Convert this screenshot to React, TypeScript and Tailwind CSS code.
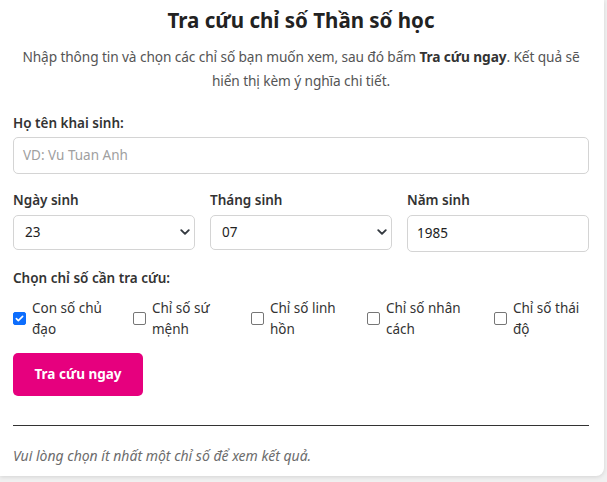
import React from "react";

const options = [
  { l1: "Con số chủ", l2: "đạo", w: "w-[120px]", checked: true },
  { l1: "Chỉ số sứ", l2: "mệnh", w: "w-[118px]", checked: false },
  { l1: "Chỉ số linh", l2: "hồn", w: "w-[116px]", checked: false },
  { l1: "Chỉ số nhân", l2: "cách", w: "w-[127px]", checked: false },
  { l1: "Chỉ số thái", l2: "độ", w: "flex-1", checked: false },
];

function Chevron() {
  return (
    <svg width="10" height="10" viewBox="0 0 16 16" className="text-[#343a40]">
      <path d="M2 5l6 6 6-6" fill="none" stroke="currentColor" strokeWidth="3" strokeLinecap="round" strokeLinejoin="round" />
    </svg>
  );
}

export default function App() {
  return (
    <div
      className="w-[607px] h-[482px] bg-[#f0f0f0] overflow-hidden text-[#212529]"
      style={{ fontFamily: '"Segoe UI", "Noto Sans", sans-serif' }}
    >
      <div className="w-[604px] h-[476px] bg-white rounded-br-[8px] shadow-[0_1px_4px_rgba(0,0,0,0.12)] pl-[13px] pr-[15px] pt-[6px]">
        <h1 className="text-center text-[20.5px] leading-[28px] font-bold text-[#222]">
          Tra cứu chỉ số Thần số học
        </h1>
        <p className="mt-[11px] text-center text-[13.7px] leading-[23.5px] text-[#555] tracking-[-0.1px]">
          Nhập thông tin và chọn các chỉ số bạn muốn xem, sau đó bấm <b className="font-bold text-[#333]">Tra cứu ngay</b>. Kết quả sẽ
          <br />
          hiển thị kèm ý nghĩa chi tiết.
        </p>

        <div className="mt-[21px] text-[13.5px] leading-[21px] font-semibold text-[#333]">Họ tên khai sinh:</div>
        <div className="mt-[2.5px] h-[37px] border border-[#d4d4d4] rounded-[5px] flex items-center pl-[9px] text-[13.5px] text-[#a0a0a0]">
          VD: Vu Tuan Anh
        </div>

        <div className="mt-[16.5px] flex gap-[15px]">
          <div className="w-[182px]">
            <div className="text-[13.5px] leading-[21px] font-semibold text-[#333]">Ngày sinh</div>
            <div className="mt-[3.5px] h-[35px] border border-[#d4d4d4] rounded-[5px] flex items-center justify-between pl-[11px] pr-[4px] text-[13.5px] text-[#222]">
              <span>23</span>
              <Chevron />
            </div>
          </div>
          <div className="w-[182px]">
            <div className="text-[13.5px] leading-[21px] font-semibold text-[#333]">Tháng sinh</div>
            <div className="mt-[3.5px] h-[35px] border border-[#d4d4d4] rounded-[5px] flex items-center justify-between pl-[11px] pr-[4px] text-[13.5px] text-[#222]">
              <span>07</span>
              <Chevron />
            </div>
          </div>
          <div className="flex-1">
            <div className="text-[13.5px] leading-[21px] font-semibold text-[#333]">Năm sinh</div>
            <div className="mt-[3.5px] h-[37px] border border-[#d4d4d4] rounded-[5px] flex items-center pl-[9px] text-[13.5px] text-[#222]">
              1985
            </div>
          </div>
        </div>

        <div className="mt-[16.5px] text-[13.5px] leading-[21px] font-semibold text-[#333]">Chọn chỉ số cần tra cứu:</div>
        <div className="mt-[8.5px] flex">
          {options.map((o) => (
            <label key={o.l1} className={`${o.w} flex items-center gap-[6px]`}>
              <span
                className={
                  o.checked
                    ? "w-[13px] h-[13px] shrink-0 rounded-[2px] bg-[#0d6efd] border border-[#0d6efd] flex items-center justify-center"
                    : "w-[13px] h-[13px] shrink-0 rounded-[2px] bg-white border border-[#767676]"
                }
              >
                {o.checked && (
                  <svg width="9" height="9" viewBox="0 0 10 10">
                    <path d="M1.5 5.2l2.2 2.2L8.5 2.6" fill="none" stroke="white" strokeWidth="1.8" strokeLinecap="round" strokeLinejoin="round" />
                  </svg>
                )}
              </span>
              <span className="text-[13.5px] leading-[21px] text-[#333]">
                {o.l1}
                <br />
                {o.l2}
              </span>
            </label>
          ))}
        </div>

        <button className="mt-[13.5px] w-[130px] h-[43px] rounded-[5px] bg-[#e6007e] text-white text-[13.5px] font-bold block">
          Tra cứu ngay
        </button>

        <div className="mt-[29px] h-px bg-[#333]" />

        <div className="mt-[18.5px] text-[14px] leading-[21px] italic text-[#6c6c6c]">
          Vui lòng chọn ít nhất một chỉ số để xem kết quả.
        </div>
      </div>
    </div>
  );
}
